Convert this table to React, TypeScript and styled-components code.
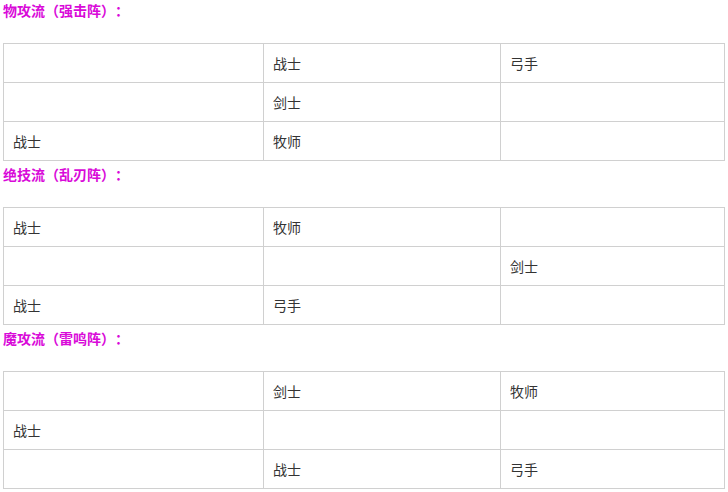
import styled, { createGlobalStyle } from "styled-components";

const GlobalStyle = createGlobalStyle`
	html, body {
		margin: 0;
		padding: 0;
		background: #fff;
	}
	body {
		font-family: "Noto Sans CJK SC", "Microsoft YaHei", sans-serif;
		text-spacing-trim: space-all;
	}
`;

const Page = styled.div`
	width: 728px;
	padding: 0 4px 0 3px;
	box-sizing: border-box;
`;

const Heading = styled.p<{ $first?: boolean }>`
	margin: 0;
	height: ${({ $first }) => ($first ? "43px" : "46px")};
	padding-top: ${({ $first }) => ($first ? "0" : "3px")};
	box-sizing: border-box;
	font-size: 14px;
	line-height: 20px;
	font-weight: bold;
	color: #d90ad9;
	text-spacing-trim: space-all;
`;

const Table = styled.table`
	width: 722px;
	border-collapse: collapse;
	table-layout: fixed;
`;

const Cell = styled.td`
	height: 38px;
	padding: 0 0 0 9px;
	border: 1px solid #d0d0d0;
	font-size: 14px;
	color: #333;
	vertical-align: middle;
`;

type Formation = {
	title: string;
	rows: string[][];
};

const formations: Formation[] = [
	{
		title: "物攻流（强击阵）：",
		rows: [
			["", "战士", "弓手"],
			["", "剑士", ""],
			["战士", "牧师", ""],
		],
	},
	{
		title: "绝技流（乱刃阵）：",
		rows: [
			["战士", "牧师", ""],
			["", "", "剑士"],
			["战士", "弓手", ""],
		],
	},
	{
		title: "魔攻流（雷鸣阵）：",
		rows: [
			["", "剑士", "牧师"],
			["战士", "", ""],
			["", "战士", "弓手"],
		],
	},
];

export default function App() {
	return (
		<Page>
			<GlobalStyle />
			{formations.map((f, i) => (
				<div key={f.title}>
					<Heading $first={i === 0}>{f.title}</Heading>
					<Table>
						<colgroup>
							<col style={{ width: 260 }} />
							<col style={{ width: 237 }} />
							<col />
						</colgroup>
						<tbody>
							{f.rows.map((row, r) => (
								<tr key={r}>
									{row.map((name, c) => (
										<Cell key={c}>{name}</Cell>
									))}
								</tr>
							))}
						</tbody>
					</Table>
				</div>
			))}
		</Page>
	);
}
